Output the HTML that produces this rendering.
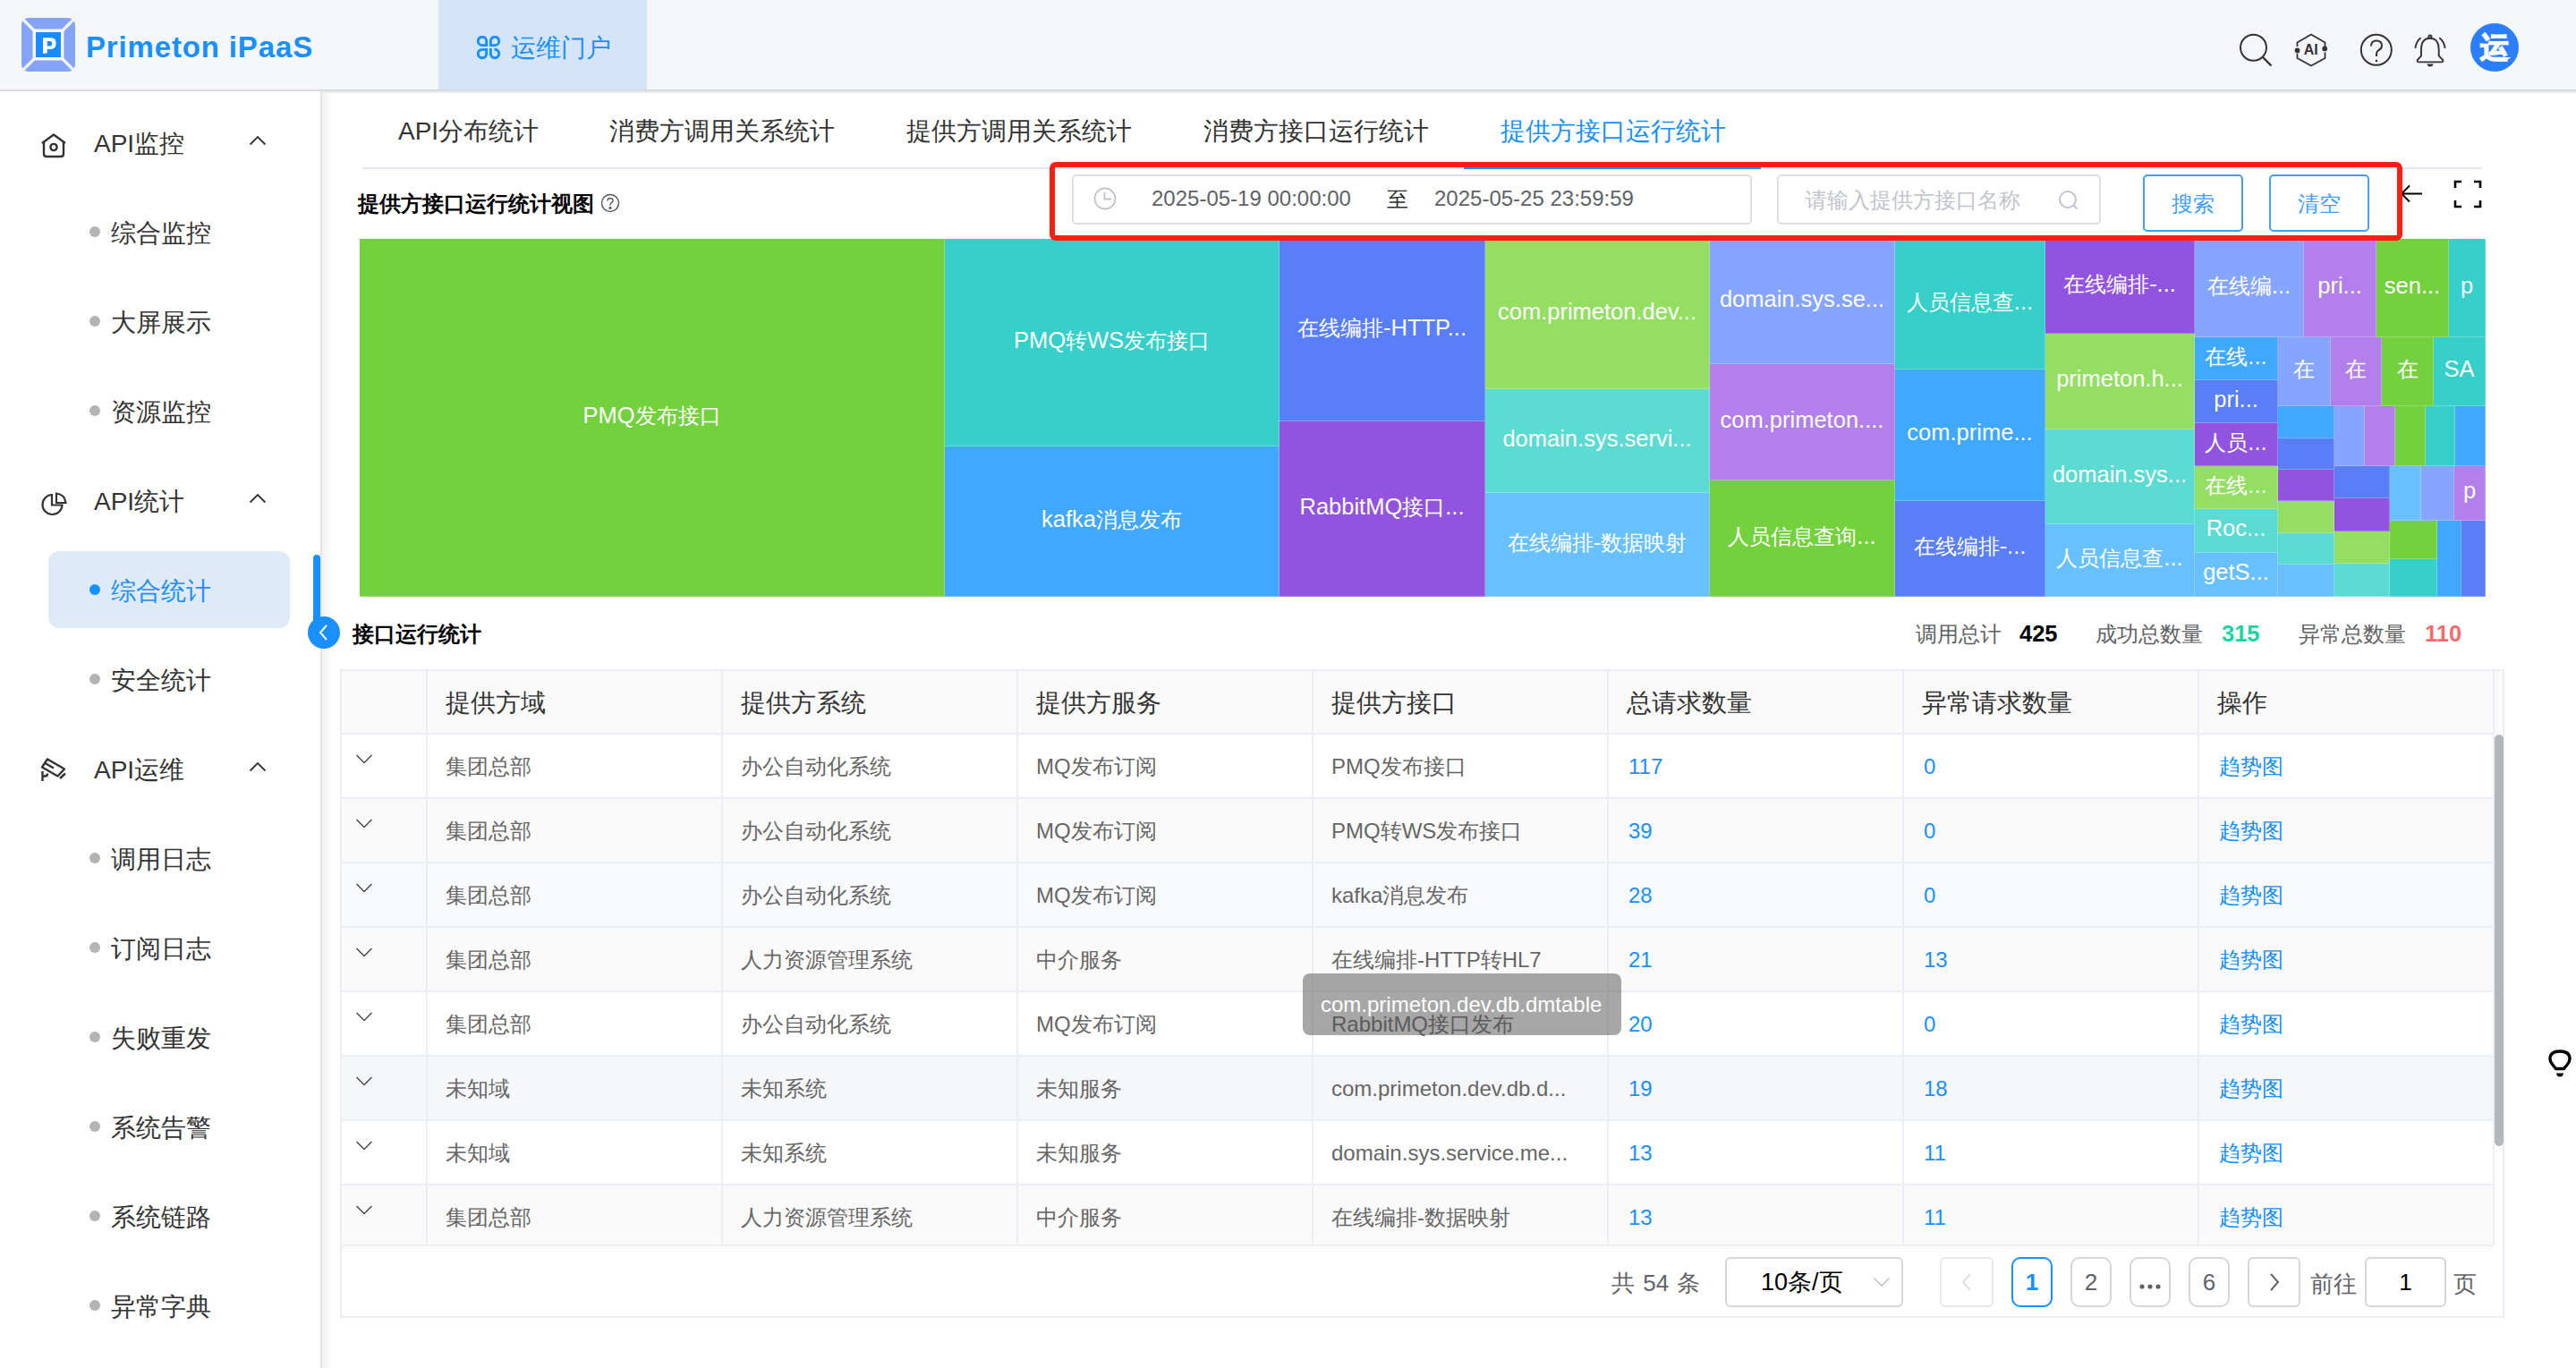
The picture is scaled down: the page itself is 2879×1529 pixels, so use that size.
<!DOCTYPE html>
<html><head><meta charset="utf-8"><style>
*{box-sizing:border-box;margin:0;padding:0}
html,body{width:2879px;height:1529px;overflow:hidden;background:#fff;font-family:"Liberation Sans",sans-serif;color:#333}
.a{position:absolute}
.t{position:absolute;white-space:nowrap;line-height:1}
.mi{font-size:28px;color:#333}
.dot{position:absolute;width:12px;height:12px;border-radius:50%;background:#b4b4b4}
.tm{position:absolute;overflow:hidden;color:#fff;font-size:25.5px;display:flex;align-items:center;justify-content:center;white-space:nowrap;line-height:1;border-right:1px solid rgba(255,255,255,.25);border-bottom:1px solid rgba(255,255,255,.25)}
.hc{position:absolute;font-size:28px;color:#333;line-height:1;white-space:nowrap}
.bc{position:absolute;font-size:24px;color:#666;line-height:1;white-space:nowrap}
.lk{color:#1890ff}
.pg{position:absolute;top:1405px;height:56px;border:2px solid #dcdfe6;border-radius:6px;background:#fff;font-size:24px;color:#606266;display:flex;align-items:center;justify-content:center;line-height:1}
</style></head><body>
<div class="a" style="left:0;top:0;width:2879px;height:100px;background:#f5f6f9"></div>
<div class="a" style="left:0;top:100px;width:2879px;height:2px;background:#dadada"></div>
<div class="a" style="left:360px;top:102px;width:2519px;height:2px;background:#e9ecf4"></div>
<svg class="a" style="left:24px;top:20px" width="60" height="60" viewBox="0 0 60 60">
<rect x="0" y="0" width="60" height="60" rx="8" fill="#85a3f7"/>
<path d="M0 0L16 16 M60 0L44 16 M0 60L16 44 M60 60L44 44" stroke="#f4f5f7" stroke-width="3.2"/>
<rect x="12.5" y="12.5" width="35" height="35" fill="#f4f5f7"/>
<rect x="16" y="16" width="28" height="28" fill="#1a8cff"/>
<path d="M24 40V22.3H33Q38.6 22.3 38.6 28.6Q38.6 35 33 35H28.8V39.3Z M28.8 26V31.6H32Q34.2 31.6 34.2 28.8Q34.2 26 32 26Z" fill="#fff" fill-rule="evenodd"/>
</svg>
<div class="t" style="left:96px;top:36px;font-size:33px;font-weight:bold;color:#1890ff;letter-spacing:0.85px">Primeton iPaaS</div>
<div class="a" style="left:490px;top:0;width:233px;height:100px;background:#d5e5f7"></div>
<svg class="a" style="left:533px;top:40px" width="27" height="27" viewBox="0 0 27 27" fill="none" stroke="#1890ff" stroke-width="2.9">
<path d="M10.65 10.65V5.95A4.7 4.7 0 1 0 5.95 10.65Z"/><path d="M15.35 10.65V5.95A4.7 4.7 0 1 1 20.05 10.65Z"/>
<path d="M10.65 15.35V20.05A4.7 4.7 0 1 1 5.95 15.35Z"/><path d="M15.35 14V20.05A4.7 4.7 0 1 0 19.6 15.35"/></svg>
<div class="t" style="left:571px;top:40px;font-size:28px;color:#1890ff">运维门户</div>
<svg class="a" style="left:2500px;top:35px" width="42" height="42" viewBox="0 0 42 42" fill="none" stroke="#333" stroke-width="2">
<circle cx="18.5" cy="18.3" r="14.5"/><path d="M29 29L38.5 38.5" stroke-width="2.4"/></svg>
<svg class="a" style="left:2562px;top:35px" width="42" height="42" viewBox="0 0 42 42" fill="none" stroke="#333" stroke-width="1.8">
<path d="M5.5 17V12.5L21 3.5L36.5 12.5V17"/><path d="M36.5 23.5V30L21 38.5L5.5 30V25"/>
<circle cx="5.5" cy="21.5" r="2" fill="#333"/><circle cx="36.2" cy="19.4" r="2" fill="#333"/>
<text x="20.7" y="26" text-anchor="middle" font-family="Liberation Sans" font-weight="bold" font-size="16" fill="#333" stroke="none">AI</text></svg>
<svg class="a" style="left:2636px;top:36px" width="40" height="40" viewBox="0 0 40 40" fill="none" stroke="#333" stroke-width="2">
<circle cx="19.8" cy="19.8" r="17"/><path d="M14 15.5Q14 9.5 20 9.5Q26 9.5 26 15Q26 18.5 22.5 20Q20 21.5 20 25V27"/>
<circle cx="20" cy="32" r="1.3" fill="#333" stroke="none"/></svg>
<svg class="a" style="left:2697px;top:36px" width="38" height="42" viewBox="0 0 38 42" fill="none" stroke="#333" stroke-width="1.9">
<path d="M18.9 6.7C12 6.7 9 12 9 19.3V26.3L4.8 31Q4 33.4 6.5 33.4H31.5Q34 33.4 33.2 31L28.7 26.3V19.3C28.7 12 25.8 6.7 18.9 6.7Z"/>
<circle cx="18.9" cy="5" r="1.6"/><path d="M15.5 35.6H22.5Q22 38.6 19 38.6Q16 38.6 15.5 35.6Z" fill="#333" stroke="none"/>
<path d="M2.4 17.8Q3.5 10 8.6 6.2"/><path d="M35.6 17.8Q34.5 10 29.2 6.2"/></svg>
<div class="a" style="left:2761px;top:26px;width:54px;height:54px;border-radius:50%;background:#2b7efe"></div>
<div class="t" style="left:2772px;top:37px;font-size:32px;font-weight:bold;color:#fff;-webkit-text-stroke:1.6px #fff">运</div>
<div class="a" style="left:358px;top:102px;width:2px;height:1427px;background:#e4e4e4"></div>
<div class="a" style="left:360px;top:104px;width:12px;height:1425px;background:linear-gradient(to right,#f3f3f3,#fff)"></div>
<svg class="a" style="left:44px;top:148px" width="32" height="30" viewBox="0 0 32 30" fill="none" stroke="#333" stroke-width="2.4" stroke-linejoin="round"><path d="M3 12L16 2.5L29 12"/><path d="M5 10.5V24Q5 27 8 27H24Q27 27 27 24V10.5"/><circle cx="16" cy="16.5" r="3.6"/></svg>
<div class="t mi" style="left:105px;top:147px">API监控</div>
<svg class="a" style="left:278px;top:151px" width="20" height="12" viewBox="0 0 20 12"><path d="M1.5 10.5L10 2L18.5 10.5" fill="none" stroke="#333" stroke-width="1.8"/></svg>
<div class="dot" style="left:100px;top:253px"></div>
<div class="t mi" style="left:124px;top:247px">综合监控</div>
<div class="dot" style="left:100px;top:353px"></div>
<div class="t mi" style="left:124px;top:347px">大屏展示</div>
<div class="dot" style="left:100px;top:453px"></div>
<div class="t mi" style="left:124px;top:447px">资源监控</div>
<svg class="a" style="left:44px;top:547px" width="32" height="32" viewBox="0 0 32 32" fill="none" stroke="#333" stroke-width="2.2"><path d="M14 6A11 11 0 1 0 25.5 17.5H14Z"/><path d="M19 4.5V15H29.5Q28.5 5.5 19 4.5Z"/></svg>
<div class="t mi" style="left:105px;top:547px">API统计</div>
<svg class="a" style="left:278px;top:551px" width="20" height="12" viewBox="0 0 20 12"><path d="M1.5 10.5L10 2L18.5 10.5" fill="none" stroke="#333" stroke-width="1.8"/></svg>
<div class="a" style="left:54px;top:616px;width:270px;height:86px;border-radius:12px;background:#dfeaf7"></div>
<div class="dot" style="left:100px;top:653px;background:#1890ff"></div>
<div class="t mi" style="left:124px;top:647px;color:#1890ff">综合统计</div>
<div class="dot" style="left:100px;top:753px"></div>
<div class="t mi" style="left:124px;top:747px">安全统计</div>
<svg class="a" style="left:42px;top:845px" width="36" height="34" viewBox="0 0 36 34" fill="none" stroke="#333" stroke-width="2.4" stroke-linejoin="round"><path d="M11 3.5L30 14.5L22.5 22.5L5 12.5Z"/><path d="M7.5 7.5L18 13.5"/><path d="M5.5 17V28 M5.5 22.5H8.5Q11 22.5 11 19.5"/><path d="M25 25L31 19.5"/></svg>
<div class="t mi" style="left:105px;top:847px">API运维</div>
<svg class="a" style="left:278px;top:851px" width="20" height="12" viewBox="0 0 20 12"><path d="M1.5 10.5L10 2L18.5 10.5" fill="none" stroke="#333" stroke-width="1.8"/></svg>
<div class="dot" style="left:100px;top:953px"></div>
<div class="t mi" style="left:124px;top:947px">调用日志</div>
<div class="dot" style="left:100px;top:1053px"></div>
<div class="t mi" style="left:124px;top:1047px">订阅日志</div>
<div class="dot" style="left:100px;top:1153px"></div>
<div class="t mi" style="left:124px;top:1147px">失败重发</div>
<div class="dot" style="left:100px;top:1253px"></div>
<div class="t mi" style="left:124px;top:1247px">系统告警</div>
<div class="dot" style="left:100px;top:1353px"></div>
<div class="t mi" style="left:124px;top:1347px">系统链路</div>
<div class="dot" style="left:100px;top:1453px"></div>
<div class="t mi" style="left:124px;top:1447px">异常字典</div>
<div class="a" style="left:350px;top:620px;width:8px;height:86px;border-radius:4px 4px 0 0;background:#1890ff"></div>
<div class="a" style="left:344px;top:689px;width:36px;height:36px;border-radius:50%;background:#1890ff"></div>
<svg class="a" style="left:344px;top:689px" width="36" height="36" viewBox="0 0 36 36"><path d="M21 10L14 18L21 26" fill="none" stroke="#fff" stroke-width="2"/></svg>
<div class="t" style="left:445px;top:133px;font-size:28px;color:#333">API分布统计</div>
<div class="t" style="left:681px;top:133px;font-size:28px;color:#333">消费方调用关系统计</div>
<div class="t" style="left:1013px;top:133px;font-size:28px;color:#333">提供方调用关系统计</div>
<div class="t" style="left:1345px;top:133px;font-size:28px;color:#333">消费方接口运行统计</div>
<div class="t" style="left:1677px;top:133px;font-size:28px;color:#1890ff">提供方接口运行统计</div>
<div class="a" style="left:405px;top:187px;width:2369px;height:2px;background:#e4e7ed"></div>
<div class="a" style="left:1636px;top:187px;width:332px;height:2px;background:#1890ff"></div>
<div class="t" style="left:400px;top:216px;font-size:24px;font-weight:bold;color:#000">提供方接口运行统计视图</div>
<svg class="a" style="left:671px;top:216px" width="22" height="22" viewBox="0 0 22 22" fill="none" stroke="#555" stroke-width="1.4"><circle cx="11" cy="11" r="9.5"/><path d="M8 8.5Q8 5.5 11 5.5Q14 5.5 14 8.3Q14 10 12 11Q11 11.7 11 13.5"/><circle cx="11" cy="16.3" r=".9" fill="#555"/></svg>
<div class="a" style="left:1198px;top:195px;width:760px;height:56px;border:2px solid #dcdfe6;border-radius:5px;background:#fff"></div>
<svg class="a" style="left:1221px;top:208px" width="28" height="28" viewBox="0 0 28 28" fill="none" stroke="#c0c4cc" stroke-width="1.8"><circle cx="14" cy="14" r="11.5"/><path d="M13.5 7V14.5H21"/></svg>
<div class="t" style="left:1287px;top:210px;font-size:24px;color:#606266">2025-05-19 00:00:00</div>
<div class="t" style="left:1550px;top:211px;font-size:24px;color:#303133">至</div>
<div class="t" style="left:1603px;top:210px;font-size:24px;color:#606266">2025-05-25 23:59:59</div>
<div class="a" style="left:1986px;top:195px;width:362px;height:56px;border:2px solid #dcdfe6;border-radius:5px;background:#fff"></div>
<div class="t" style="left:2018px;top:212px;font-size:24px;color:#c0c4cc">请输入提供方接口名称</div>
<svg class="a" style="left:2298px;top:210px" width="28" height="28" viewBox="0 0 28 28" fill="none" stroke="#c0c4cc" stroke-width="2"><circle cx="13" cy="13" r="9"/><path d="M19.5 19.5L23.5 23.5"/></svg>
<div class="a" style="left:2395px;top:195px;width:112px;height:64px;border:2px solid #409eff;border-radius:5px;background:#fff"></div>
<div class="t" style="left:2427px;top:216px;font-size:24px;color:#409eff">搜索</div>
<div class="a" style="left:2536px;top:195px;width:112px;height:64px;border:2px solid #409eff;border-radius:5px;background:#fff"></div>
<div class="t" style="left:2568px;top:216px;font-size:24px;color:#409eff">清空</div>
<svg class="a" style="left:2680px;top:202px" width="30" height="30" viewBox="0 0 30 30" fill="none" stroke="#000" stroke-width="2"><path d="M27 14.5H5 M13 5.5L4 14.5L13 23.5"/></svg>
<svg class="a" style="left:2740px;top:199px" width="36" height="36" viewBox="0 0 36 36" fill="none" stroke="#000" stroke-width="2.6"><path d="M4 11V4H11 M25 4H32V11 M32 25V32H25 M11 32H4V25"/></svg>
<div class="tm" style="left:402px;top:267px;width:654px;height:400px;background:#73d13d"><span style="position:relative;top:-2px">PMQ<span style="font-size:24px">发布接口</span></span></div>
<div class="tm" style="left:1056px;top:267px;width:374px;height:232px;background:#36cfc9"><span style="position:relative;top:-2px">PMQ<span style="font-size:24px">转</span>WS<span style="font-size:24px">发布接口</span></span></div>
<div class="tm" style="left:1056px;top:499px;width:374px;height:168px;background:#40a9ff"><span style="position:relative;top:-2px">kafka<span style="font-size:24px">消息发布</span></span></div>
<div class="tm" style="left:1430px;top:267px;width:230px;height:204px;background:#597ef7"><span style="position:relative;top:-2px"><span style="font-size:24px">在线编排</span>-HTTP...</span></div>
<div class="tm" style="left:1430px;top:471px;width:230px;height:196px;background:#9254de"><span style="position:relative;top:-2px">RabbitMQ<span style="font-size:24px">接口</span>...</span></div>
<div class="tm" style="left:1660px;top:267px;width:251px;height:168px;background:#95de64"><span style="position:relative;top:-2px">com.primeton.dev...</span></div>
<div class="tm" style="left:1660px;top:435px;width:251px;height:116px;background:#5cdbd3"><span style="position:relative;top:-2px">domain.sys.servi...</span></div>
<div class="tm" style="left:1660px;top:551px;width:251px;height:116px;background:#69c0ff"><span style="position:relative;top:-2px"><span style="font-size:24px">在线编排</span>-<span style="font-size:24px">数据映射</span></span></div>
<div class="tm" style="left:1911px;top:267px;width:207px;height:140px;background:#85a5ff"><span style="position:relative;top:-2px">domain.sys.se...</span></div>
<div class="tm" style="left:1911px;top:407px;width:207px;height:130px;background:#b37feb"><span style="position:relative;top:-2px">com.primeton....</span></div>
<div class="tm" style="left:1911px;top:537px;width:207px;height:130px;background:#73d13d"><span style="position:relative;top:-2px"><span style="font-size:24px">人员信息查询</span>...</span></div>
<div class="tm" style="left:2118px;top:267px;width:168px;height:146px;background:#36cfc9"><span style="position:relative;top:-2px"><span style="font-size:24px">人员信息查</span>...</span></div>
<div class="tm" style="left:2118px;top:413px;width:168px;height:147px;background:#40a9ff"><span style="position:relative;top:-2px">com.prime...</span></div>
<div class="tm" style="left:2118px;top:560px;width:168px;height:107px;background:#597ef7"><span style="position:relative;top:-2px"><span style="font-size:24px">在线编排</span>-...</span></div>
<div class="tm" style="left:2286px;top:267px;width:167px;height:106px;background:#9254de"><span style="position:relative;top:-2px"><span style="font-size:24px">在线编排</span>-...</span></div>
<div class="tm" style="left:2286px;top:373px;width:167px;height:107px;background:#95de64"><span style="position:relative;top:-2px">primeton.h...</span></div>
<div class="tm" style="left:2286px;top:480px;width:167px;height:106px;background:#5cdbd3"><span style="position:relative;top:-2px">domain.sys...</span></div>
<div class="tm" style="left:2286px;top:586px;width:167px;height:81px;background:#69c0ff"><span style="position:relative;top:-2px"><span style="font-size:24px">人员信息查</span>...</span></div>
<div class="tm" style="left:2453px;top:267px;width:122px;height:110px;background:#85a5ff"><span style="position:relative;top:-2px"><span style="font-size:24px">在线编</span>...</span></div>
<div class="tm" style="left:2575px;top:267px;width:81px;height:110px;background:#b37feb"><span style="position:relative;top:-2px">pri...</span></div>
<div class="tm" style="left:2656px;top:267px;width:81px;height:110px;background:#73d13d"><span style="position:relative;top:-2px">sen...</span></div>
<div class="tm" style="left:2737px;top:267px;width:41px;height:110px;background:#36cfc9"><span style="position:relative;top:-2px">p</span></div>
<div class="tm" style="left:2453px;top:377px;width:93px;height:48px;background:#40a9ff"><span style="position:relative;top:-2px"><span style="font-size:24px">在线</span>...</span></div>
<div class="tm" style="left:2453px;top:425px;width:93px;height:48px;background:#597ef7"><span style="position:relative;top:-2px">pri...</span></div>
<div class="tm" style="left:2453px;top:473px;width:93px;height:48px;background:#9254de"><span style="position:relative;top:-2px"><span style="font-size:24px">人员</span>...</span></div>
<div class="tm" style="left:2453px;top:521px;width:93px;height:48px;background:#95de64"><span style="position:relative;top:-2px"><span style="font-size:24px">在线</span>...</span></div>
<div class="tm" style="left:2453px;top:569px;width:93px;height:49px;background:#5cdbd3"><span style="position:relative;top:-2px">Roc...</span></div>
<div class="tm" style="left:2453px;top:618px;width:93px;height:49px;background:#69c0ff"><span style="position:relative;top:-2px">getS...</span></div>
<div class="tm" style="left:2546px;top:377px;width:59px;height:77px;background:#85a5ff"><span style="position:relative;top:-2px"><span style="font-size:24px">在</span></span></div>
<div class="tm" style="left:2605px;top:377px;width:57px;height:77px;background:#b37feb"><span style="position:relative;top:-2px"><span style="font-size:24px">在</span></span></div>
<div class="tm" style="left:2662px;top:377px;width:58px;height:77px;background:#73d13d"><span style="position:relative;top:-2px"><span style="font-size:24px">在</span></span></div>
<div class="tm" style="left:2720px;top:377px;width:58px;height:77px;background:#36cfc9"><span style="position:relative;top:-2px">SA</span></div>
<div class="tm" style="left:2546px;top:454px;width:63px;height:36px;background:#40a9ff"><span style="position:relative;top:-2px"></span></div>
<div class="tm" style="left:2546px;top:490px;width:63px;height:35px;background:#597ef7"><span style="position:relative;top:-2px"></span></div>
<div class="tm" style="left:2546px;top:525px;width:63px;height:35px;background:#9254de"><span style="position:relative;top:-2px"></span></div>
<div class="tm" style="left:2546px;top:560px;width:63px;height:36px;background:#95de64"><span style="position:relative;top:-2px"></span></div>
<div class="tm" style="left:2546px;top:596px;width:63px;height:35px;background:#5cdbd3"><span style="position:relative;top:-2px"></span></div>
<div class="tm" style="left:2546px;top:631px;width:63px;height:36px;background:#69c0ff"><span style="position:relative;top:-2px"></span></div>
<div class="tm" style="left:2609px;top:454px;width:34px;height:67px;background:#85a5ff"><span style="position:relative;top:-2px"></span></div>
<div class="tm" style="left:2643px;top:454px;width:34px;height:67px;background:#b37feb"><span style="position:relative;top:-2px"></span></div>
<div class="tm" style="left:2677px;top:454px;width:34px;height:67px;background:#73d13d"><span style="position:relative;top:-2px"></span></div>
<div class="tm" style="left:2711px;top:454px;width:33px;height:67px;background:#36cfc9"><span style="position:relative;top:-2px"></span></div>
<div class="tm" style="left:2744px;top:454px;width:34px;height:67px;background:#40a9ff"><span style="position:relative;top:-2px"></span></div>
<div class="tm" style="left:2609px;top:521px;width:62px;height:36px;background:#597ef7"><span style="position:relative;top:-2px"></span></div>
<div class="tm" style="left:2609px;top:557px;width:62px;height:37px;background:#9254de"><span style="position:relative;top:-2px"></span></div>
<div class="tm" style="left:2609px;top:594px;width:62px;height:36px;background:#95de64"><span style="position:relative;top:-2px"></span></div>
<div class="tm" style="left:2609px;top:630px;width:62px;height:37px;background:#5cdbd3"><span style="position:relative;top:-2px"></span></div>
<div class="tm" style="left:2671px;top:521px;width:35px;height:61px;background:#69c0ff"><span style="position:relative;top:-2px"></span></div>
<div class="tm" style="left:2706px;top:521px;width:37px;height:61px;background:#85a5ff"><span style="position:relative;top:-2px"></span></div>
<div class="tm" style="left:2743px;top:521px;width:35px;height:61px;background:#b37feb"><span style="position:relative;top:-2px">p</span></div>
<div class="tm" style="left:2671px;top:582px;width:53px;height:43px;background:#73d13d"><span style="position:relative;top:-2px"></span></div>
<div class="tm" style="left:2671px;top:625px;width:53px;height:42px;background:#36cfc9"><span style="position:relative;top:-2px"></span></div>
<div class="tm" style="left:2724px;top:582px;width:27px;height:85px;background:#40a9ff"><span style="position:relative;top:-2px"></span></div>
<div class="tm" style="left:2751px;top:582px;width:27px;height:85px;background:#597ef7"><span style="position:relative;top:-2px"></span></div>
<div class="a" style="left:1173px;top:181px;width:1512px;height:88px;border:6px solid #ff1e14;border-radius:7px"></div>
<div class="t" style="left:394px;top:697px;font-size:24px;font-weight:bold;color:#000">接口运行统计</div>
<div class="t" style="left:2141px;top:697px;font-size:24px;color:#606266">调用总计</div>
<div class="t" style="left:2257px;top:696px;font-size:25.5px;font-weight:bold;color:#000">425</div>
<div class="t" style="left:2342px;top:697px;font-size:24px;color:#606266">成功总数量</div>
<div class="t" style="left:2483px;top:696px;font-size:25.5px;font-weight:bold;color:#18d6a0">315</div>
<div class="t" style="left:2569px;top:697px;font-size:24px;color:#606266">异常总数量</div>
<div class="t" style="left:2710px;top:696px;font-size:25.5px;font-weight:bold;color:#f56c6c">110</div>
<div class="a" style="left:380px;top:748px;width:2419px;height:725px;border:2px solid #ebeef5;background:#fff"></div>
<div class="a" style="left:382px;top:750px;width:2415px;height:70px;background:#fafafa"></div>
<div class="a" style="left:382px;top:820px;width:2405px;height:72px;background:#fff"></div>
<div class="a" style="left:382px;top:892px;width:2405px;height:72px;background:#fafafa"></div>
<div class="a" style="left:382px;top:964px;width:2405px;height:72px;background:#f9fafd"></div>
<div class="a" style="left:382px;top:1036px;width:2405px;height:72px;background:#fafafa"></div>
<div class="a" style="left:382px;top:1108px;width:2405px;height:72px;background:#fff"></div>
<div class="a" style="left:382px;top:1180px;width:2405px;height:72px;background:#f5f7fa"></div>
<div class="a" style="left:382px;top:1252px;width:2405px;height:72px;background:#fff"></div>
<div class="a" style="left:382px;top:1324px;width:2405px;height:72px;background:#fafafa"></div>
<div class="a" style="left:380px;top:819px;width:2407px;height:2px;background:#ebeef5"></div>
<div class="a" style="left:380px;top:891px;width:2407px;height:2px;background:#ebeef5"></div>
<div class="a" style="left:380px;top:963px;width:2407px;height:2px;background:#ebeef5"></div>
<div class="a" style="left:380px;top:1035px;width:2407px;height:2px;background:#ebeef5"></div>
<div class="a" style="left:380px;top:1107px;width:2407px;height:2px;background:#ebeef5"></div>
<div class="a" style="left:380px;top:1179px;width:2407px;height:2px;background:#ebeef5"></div>
<div class="a" style="left:380px;top:1251px;width:2407px;height:2px;background:#ebeef5"></div>
<div class="a" style="left:380px;top:1323px;width:2407px;height:2px;background:#ebeef5"></div>
<div class="a" style="left:380px;top:1391px;width:2407px;height:2px;background:#ebeef5"></div>
<div class="a" style="left:476px;top:750px;width:2px;height:642px;background:#ebeef5"></div>
<div class="a" style="left:806px;top:750px;width:2px;height:642px;background:#ebeef5"></div>
<div class="a" style="left:1136px;top:750px;width:2px;height:642px;background:#ebeef5"></div>
<div class="a" style="left:1466px;top:750px;width:2px;height:642px;background:#ebeef5"></div>
<div class="a" style="left:1796px;top:750px;width:2px;height:642px;background:#ebeef5"></div>
<div class="a" style="left:2126px;top:750px;width:2px;height:642px;background:#ebeef5"></div>
<div class="a" style="left:2456px;top:750px;width:2px;height:642px;background:#ebeef5"></div>
<div class="a" style="left:2786px;top:750px;width:2px;height:642px;background:#ebeef5"></div>
<div class="hc" style="left:498px;top:772px">提供方域</div>
<div class="hc" style="left:828px;top:772px">提供方系统</div>
<div class="hc" style="left:1158px;top:772px">提供方服务</div>
<div class="hc" style="left:1488px;top:772px">提供方接口</div>
<div class="hc" style="left:1818px;top:772px">总请求数量</div>
<div class="hc" style="left:2148px;top:772px">异常请求数量</div>
<div class="hc" style="left:2478px;top:772px">操作</div>
<svg class="a" style="left:397px;top:842px" width="20" height="12" viewBox="0 0 20 12"><path d="M1.5 2L10 10.5L18.5 2" fill="none" stroke="#444" stroke-width="1.3"/></svg>
<div class="bc" style="left:498px;top:845px">集团总部</div>
<div class="bc" style="left:828px;top:845px">办公自动化系统</div>
<div class="bc" style="left:1158px;top:845px">MQ发布订阅</div>
<div class="bc" style="left:1488px;top:845px">PMQ发布接口</div>
<div class="bc lk" style="left:1820px;top:845px">117</div>
<div class="bc lk" style="left:2150px;top:845px">0</div>
<div class="bc lk" style="left:2480px;top:845px">趋势图</div>
<svg class="a" style="left:397px;top:914px" width="20" height="12" viewBox="0 0 20 12"><path d="M1.5 2L10 10.5L18.5 2" fill="none" stroke="#444" stroke-width="1.3"/></svg>
<div class="bc" style="left:498px;top:917px">集团总部</div>
<div class="bc" style="left:828px;top:917px">办公自动化系统</div>
<div class="bc" style="left:1158px;top:917px">MQ发布订阅</div>
<div class="bc" style="left:1488px;top:917px">PMQ转WS发布接口</div>
<div class="bc lk" style="left:1820px;top:917px">39</div>
<div class="bc lk" style="left:2150px;top:917px">0</div>
<div class="bc lk" style="left:2480px;top:917px">趋势图</div>
<svg class="a" style="left:397px;top:986px" width="20" height="12" viewBox="0 0 20 12"><path d="M1.5 2L10 10.5L18.5 2" fill="none" stroke="#444" stroke-width="1.3"/></svg>
<div class="bc" style="left:498px;top:989px">集团总部</div>
<div class="bc" style="left:828px;top:989px">办公自动化系统</div>
<div class="bc" style="left:1158px;top:989px">MQ发布订阅</div>
<div class="bc" style="left:1488px;top:989px">kafka消息发布</div>
<div class="bc lk" style="left:1820px;top:989px">28</div>
<div class="bc lk" style="left:2150px;top:989px">0</div>
<div class="bc lk" style="left:2480px;top:989px">趋势图</div>
<svg class="a" style="left:397px;top:1058px" width="20" height="12" viewBox="0 0 20 12"><path d="M1.5 2L10 10.5L18.5 2" fill="none" stroke="#444" stroke-width="1.3"/></svg>
<div class="bc" style="left:498px;top:1061px">集团总部</div>
<div class="bc" style="left:828px;top:1061px">人力资源管理系统</div>
<div class="bc" style="left:1158px;top:1061px">中介服务</div>
<div class="bc" style="left:1488px;top:1061px">在线编排-HTTP转HL7</div>
<div class="bc lk" style="left:1820px;top:1061px">21</div>
<div class="bc lk" style="left:2150px;top:1061px">13</div>
<div class="bc lk" style="left:2480px;top:1061px">趋势图</div>
<svg class="a" style="left:397px;top:1130px" width="20" height="12" viewBox="0 0 20 12"><path d="M1.5 2L10 10.5L18.5 2" fill="none" stroke="#444" stroke-width="1.3"/></svg>
<div class="bc" style="left:498px;top:1133px">集团总部</div>
<div class="bc" style="left:828px;top:1133px">办公自动化系统</div>
<div class="bc" style="left:1158px;top:1133px">MQ发布订阅</div>
<div class="bc" style="left:1488px;top:1133px">RabbitMQ接口发布</div>
<div class="bc lk" style="left:1820px;top:1133px">20</div>
<div class="bc lk" style="left:2150px;top:1133px">0</div>
<div class="bc lk" style="left:2480px;top:1133px">趋势图</div>
<svg class="a" style="left:397px;top:1202px" width="20" height="12" viewBox="0 0 20 12"><path d="M1.5 2L10 10.5L18.5 2" fill="none" stroke="#444" stroke-width="1.3"/></svg>
<div class="bc" style="left:498px;top:1205px">未知域</div>
<div class="bc" style="left:828px;top:1205px">未知系统</div>
<div class="bc" style="left:1158px;top:1205px">未知服务</div>
<div class="bc" style="left:1488px;top:1205px">com.primeton.dev.db.d...</div>
<div class="bc lk" style="left:1820px;top:1205px">19</div>
<div class="bc lk" style="left:2150px;top:1205px">18</div>
<div class="bc lk" style="left:2480px;top:1205px">趋势图</div>
<svg class="a" style="left:397px;top:1274px" width="20" height="12" viewBox="0 0 20 12"><path d="M1.5 2L10 10.5L18.5 2" fill="none" stroke="#444" stroke-width="1.3"/></svg>
<div class="bc" style="left:498px;top:1277px">未知域</div>
<div class="bc" style="left:828px;top:1277px">未知系统</div>
<div class="bc" style="left:1158px;top:1277px">未知服务</div>
<div class="bc" style="left:1488px;top:1277px">domain.sys.service.me...</div>
<div class="bc lk" style="left:1820px;top:1277px">13</div>
<div class="bc lk" style="left:2150px;top:1277px">11</div>
<div class="bc lk" style="left:2480px;top:1277px">趋势图</div>
<svg class="a" style="left:397px;top:1346px" width="20" height="12" viewBox="0 0 20 12"><path d="M1.5 2L10 10.5L18.5 2" fill="none" stroke="#444" stroke-width="1.3"/></svg>
<div class="bc" style="left:498px;top:1349px">集团总部</div>
<div class="bc" style="left:828px;top:1349px">人力资源管理系统</div>
<div class="bc" style="left:1158px;top:1349px">中介服务</div>
<div class="bc" style="left:1488px;top:1349px">在线编排-数据映射</div>
<div class="bc lk" style="left:1820px;top:1349px">13</div>
<div class="bc lk" style="left:2150px;top:1349px">11</div>
<div class="bc lk" style="left:2480px;top:1349px">趋势图</div>
<div class="a" style="left:2788px;top:821px;width:10px;height:460px;border-radius:5px;background:#b4b6bc"></div>
<div class="a" style="left:1456px;top:1088px;width:356px;height:69px;border-radius:8px;background:rgba(80,80,80,.5)"></div>
<div class="t" style="left:1476px;top:1111px;font-size:24px;color:#fff">com.primeton.dev.db.dmtable</div>
<div class="t" style="left:1801px;top:1421px;font-size:26px;color:#606266;word-spacing:2px">共 54 条</div>
<div class="pg" style="left:1928px;width:199px;justify-content:flex-start;padding-left:38px;color:#000;font-size:27px;border-color:#d6d6d6">10条/页</div>
<svg class="a" style="left:2093px;top:1427px" width="20" height="12" viewBox="0 0 20 12"><path d="M1.5 1.5L10 10L18.5 1.5" fill="none" stroke="#c0c4cc" stroke-width="1.6"/></svg>
<div class="pg" style="left:2168px;width:60px;border-color:#e6e8ee"><svg width="14" height="22" viewBox="0 0 14 22"><path d="M11 2L3 11L11 20" fill="none" stroke="#dcdfe6" stroke-width="2"/></svg></div>
<div class="pg" style="left:2248px;width:46px;border-color:#1890ff;border-radius:10px;color:#1890ff;font-weight:bold;font-size:26px">1</div>
<div class="pg" style="left:2314px;width:46px;border-color:#d6d6d6;border-radius:10px;font-size:26px">2</div>
<div class="pg" style="left:2380px;width:46px;border-color:#d6d6d6;border-radius:10px"><svg width="24" height="6" viewBox="0 0 24 6" style="position:relative;top:5px"><circle cx="3" cy="3" r="2.6" fill="#606266"/><circle cx="12" cy="3" r="2.6" fill="#606266"/><circle cx="21" cy="3" r="2.6" fill="#606266"/></svg></div>
<div class="pg" style="left:2446px;width:46px;border-color:#d6d6d6;border-radius:10px;font-size:26px">6</div>
<div class="pg" style="left:2512px;width:59px;border-color:#d6d6d6"><svg width="14" height="22" viewBox="0 0 14 22"><path d="M3 2L11 11L3 20" fill="none" stroke="#606266" stroke-width="2"/></svg></div>
<div class="t" style="left:2582px;top:1422px;font-size:26px;color:#606266">前往</div>
<div class="pg" style="left:2643px;width:91px;color:#000;font-size:26px;border-color:#d6d6d6">1</div>
<div class="t" style="left:2742px;top:1422px;font-size:26px;color:#606266">页</div>
<svg class="a" style="left:2848px;top:1173px" width="26" height="34" viewBox="0 0 26 34" fill="none" stroke="#000" stroke-width="3.4"><path d="M8.5 21.5L4.5 16.5Q2 13.5 2 10.5Q2 2 13 2Q24 2 24 10.5Q24 13.5 21.5 16.5L17.5 21.5Z"/><path d="M9 26.5H17Q16.5 30.5 13 30.5Q9.5 30.5 9 26.5Z" fill="#000" stroke="none"/></svg>
</body></html>
